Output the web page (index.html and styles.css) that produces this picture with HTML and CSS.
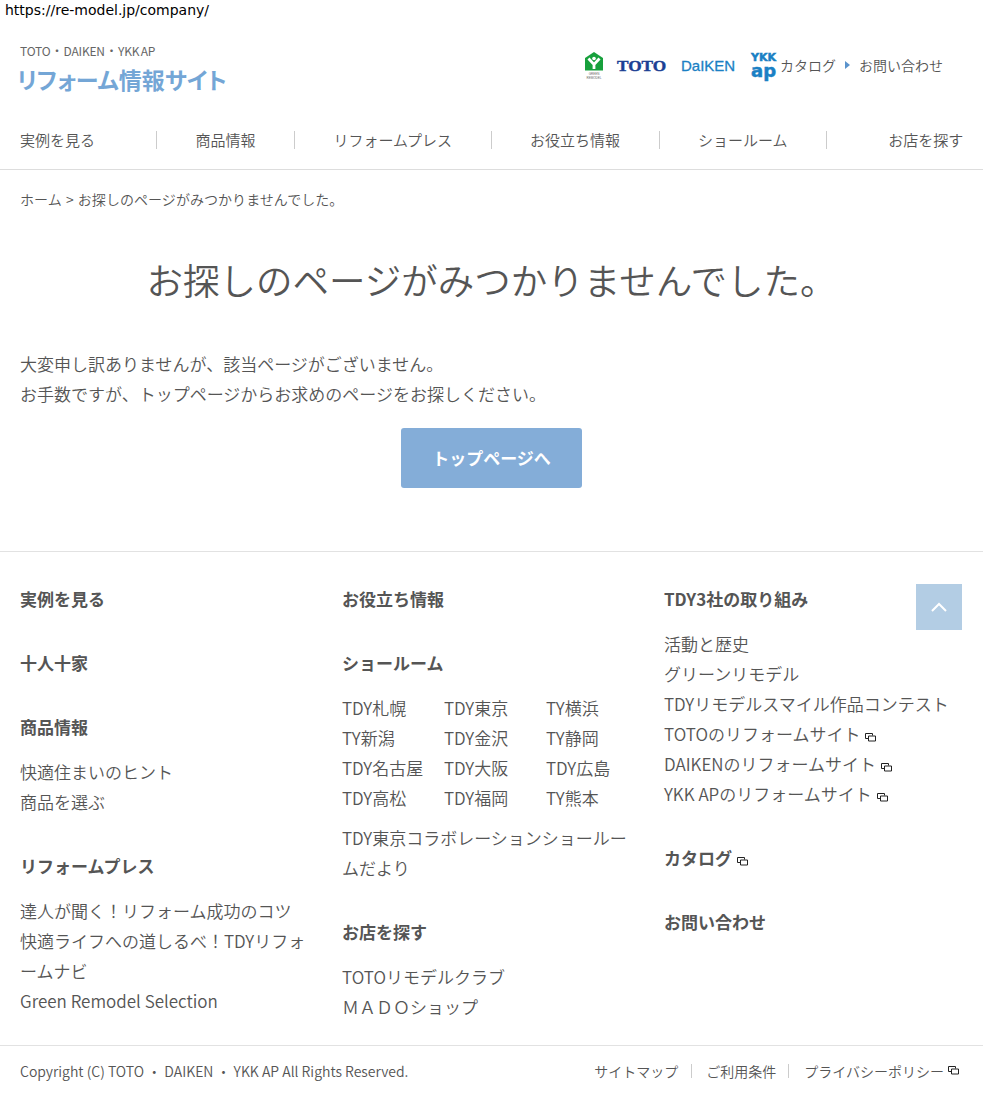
FILE: index.html
```html
<!DOCTYPE html>
<html lang="ja">
<head>
  <meta charset="UTF-8">
  <title>お探しのページがみつかりませんでした。</title>
  <link rel="stylesheet" href="styles.css">
</head>
<body>
  <div class="url">https://re-model.jp/company/</div>

  <header class="header">
    <a class="site-logo">
      <span class="site-sub">TOTO ・ DAIKEN ・ <span class="site-sub-last">YKK AP</span></span>
      <span class="site-name">リフォーム情報サイト</span>
    </a>
    <div class="header-right">
      <svg class="logo-green" width="20" height="27" viewBox="0 0 20 27">
        <path d="M10 0 L19 6 V18.500 H1 V6 Z" fill="#17a03c"/>
        <path d="M4.500 6.500 L10 12.500 L15.500 6.500 M10 12 V17" fill="none" stroke="#fff" stroke-width="2.800"/>
        <circle cx="10" cy="6.500" r="1.800" fill="#fff"/>
        <text class="green-text" x="10" y="22.500">GREEN</text>
        <text class="green-text" x="10" y="26.500">REMODEL</text>
      </svg>
      <span class="logo-toto">TOTO</span>
      <span class="logo-daiken">DaIKEN</span>
      <span class="logo-ykk"><span class="ykk-top">YKK</span><span class="ykk-bottom">ap</span></span>
      <a class="head-link">カタログ</a>
      <span class="head-arrow"></span>
      <a class="head-link">お問い合わせ</a>
    </div>
  </header>

  <nav class="gnav">
    <a class="gnav-item">実例を見る</a>
    <a class="gnav-item">商品情報</a>
    <a class="gnav-item">リフォームプレス</a>
    <a class="gnav-item">お役立ち情報</a>
    <a class="gnav-item">ショールーム</a>
    <a class="gnav-item">お店を探す</a>
  </nav>

  <div class="breadcrumb">ホーム &gt; お探しのページがみつかりませんでした。</div>

  <main class="main">
    <h1 class="title">お探しのページがみつかりませんでした。</h1>
    <p class="message">大変申し訳ありませんが、該当ページがございません。<br>お手数ですが、トップページからお求めのページをお探しください。</p>
    <a class="top-btn">トップページへ</a>
  </main>

  <footer class="footer">
    <a class="pagetop">
      <svg width="16" height="10" viewBox="0 0 16 10"><path d="M1 9 L8 2 L15 9" fill="none" stroke="#fff" stroke-width="2"/></svg>
    </a>
    <div class="fcols">
      <div class="fcol">
        <h3 class="fhead">実例を見る</h3>
        <h3 class="fhead">十人十家</h3>
        <h3 class="fhead">商品情報</h3>
        <ul class="flist">
          <li>快適住まいのヒント</li>
          <li>商品を選ぶ</li>
        </ul>
        <h3 class="fhead">リフォームプレス</h3>
        <ul class="flist">
          <li>達人が聞く！リフォーム成功のコツ</li>
          <li>快適ライフへの道しるべ！TDYリフォームナビ</li>
          <li>Green Remodel Selection</li>
        </ul>
      </div>
      <div class="fcol">
        <h3 class="fhead">お役立ち情報</h3>
        <h3 class="fhead">ショールーム</h3>
        <ul class="room-grid">
          <li>TDY札幌</li><li>TDY東京</li><li>TY横浜</li>
          <li>TY新潟</li><li>TDY金沢</li><li>TY静岡</li>
          <li>TDY名古屋</li><li>TDY大阪</li><li>TDY広島</li>
          <li>TDY高松</li><li>TDY福岡</li><li>TY熊本</li>
        </ul>
        <ul class="flist room-extra">
          <li>TDY東京コラボレーションショールームだより</li>
        </ul>
        <h3 class="fhead">お店を探す</h3>
        <ul class="flist">
          <li>TOTOリモデルクラブ</li>
          <li>ＭＡＤＯショップ</li>
        </ul>
      </div>
      <div class="fcol">
        <h3 class="fhead">TDY3社の取り組み</h3>
        <ul class="flist">
          <li>活動と歴史</li>
          <li>グリーンリモデル</li>
          <li>TDYリモデルスマイル作品コンテスト</li>
          <li>TOTOのリフォームサイト<svg class="ext" width="11" height="9" viewBox="0 0 11 9"><path d="M.5.500h7v2M.5.500v5h3M3.500 3h7v5h-7z" fill="#fff" stroke="#222"/></svg></li>
          <li>DAIKENのリフォームサイト<svg class="ext" width="11" height="9" viewBox="0 0 11 9"><path d="M.5.500h7v2M.5.500v5h3M3.500 3h7v5h-7z" fill="#fff" stroke="#222"/></svg></li>
          <li>YKK APのリフォームサイト<svg class="ext" width="11" height="9" viewBox="0 0 11 9"><path d="M.5.500h7v2M.5.500v5h3M3.500 3h7v5h-7z" fill="#fff" stroke="#222"/></svg></li>
        </ul>
        <h3 class="fhead">カタログ<svg class="ext" width="11" height="9" viewBox="0 0 11 9"><path d="M.5.500h7v2M.5.500v5h3M3.500 3h7v5h-7z" fill="#fff" stroke="#222"/></svg></h3>
        <h3 class="fhead">お問い合わせ</h3>
      </div>
    </div>
    <div class="fbottom">
      <p class="copyright">Copyright (C) TOTO ・ DAIKEN ・ YKK AP All Rights Reserved.</p>
      <ul class="fbottom-links">
        <li>サイトマップ</li>
        <li>ご利用条件</li>
        <li>プライバシーポリシー<svg class="ext ext-tight" width="11" height="9" viewBox="0 0 11 9"><path d="M.5.500h7v2M.5.500v5h3M3.500 3h7v5h-7z" fill="#fff" stroke="#222"/></svg></li>
      </ul>
    </div>
  </footer>
</body>
</html>
```

FILE: styles.css
```css
* {
  box-sizing: border-box;
}

body {
  margin: 0;
  color: #555;
  background-color: #fff;
  font-family: "Noto Sans CJK JP", "Noto Sans", sans-serif;
  font-size: 17px;
  font-weight: 350;
}

ul {
  list-style: none;
  margin: 0;
  padding: 0;
}

.url {
  height: 20px;
  padding-left: 5px;
  color: #000;
  font-family: "DejaVu Sans", sans-serif;
  font-size: 14px;
  font-weight: 400;
  line-height: 20px;
}

.header {
  display: flex;
  justify-content: space-between;
  height: 100px;
  padding: 22px 40px 0 20px;
}

.site-logo {
  display: block;
}

.site-sub {
  display: block;
  color: #666;
  font-size: 12px;
  font-weight: 400;
  line-height: 18px;
  letter-spacing: -0.2px;
  word-spacing: -1.800px;
}

.site-sub-last {
  word-spacing: -1px;
}

.site-name {
  display: block;
  margin: 3px 0 0 -3px;
  color: #74a6d6;
  font-size: 23px;
  font-weight: 700;
  font-feature-settings: "palt";
  line-height: 32px;
}

.header-right {
  display: flex;
  align-items: center;
  height: 46px;
}

.logo-green {
  margin: 0 13px 0 2px;
}

.green-text {
  fill: #666;
  font-family: "Liberation Sans", sans-serif;
  font-size: 3px;
  text-anchor: middle;
}

.logo-toto {
  width: 50px;
  margin: 2px 14px 0 0;
  color: #1c3f94;
  font-family: "Liberation Serif", serif;
  font-size: 15px;
  font-weight: 700;
  transform: scaleX(1.150);
  transform-origin: left;
  -webkit-text-stroke: 0.4px #1c3f94;
}

.logo-daiken {
  width: 53px;
  margin-right: 17px;
  color: #1a80c4;
  font-family: "Liberation Sans", sans-serif;
  font-size: 15px;
  font-weight: 400;
  -webkit-text-stroke: 0.3px #1a80c4;
}

.logo-ykk {
  display: flex;
  flex-direction: column;
  width: 25px;
  margin-right: 4px;
  color: #1a80c4;
  font-family: "DejaVu Sans", sans-serif;
  font-weight: 700;
  text-align: center;
  -webkit-text-stroke: 0.5px #1a80c4;
}

.ykk-top {
  font-size: 11px;
  line-height: 10px;
}

.ykk-bottom {
  font-size: 18px;
  line-height: 15px;
}

.head-link {
  font-size: 14px;
}

.head-arrow {
  width: 0;
  height: 0;
  margin: 0 9px;
  border-top: 4px solid transparent;
  border-bottom: 4px solid transparent;
  border-left: 5px solid #5a93cc;
}

.gnav {
  display: flex;
  height: 50px;
  padding-top: 11px;
  border-bottom: 1px solid #ddd;
  color: #555;
  font-size: 15px;
}

.gnav-item {
  height: 18px;
  padding: 0 38.600px 0 38.400px;
  border-left: 1px solid #ccc;
  line-height: 18px;
}

.gnav-item:first-child {
  padding: 0 61px 0 20px;
  border-left: 0;
}

.gnav-item:last-child {
  padding: 0 19px 0 61px;
}

.breadcrumb {
  padding: 19px 20px 0;
  font-size: 14px;
  line-height: 20px;
  letter-spacing: 0.050px;
  word-spacing: 1px;
}

.main {
  padding: 0 20px;
}

.title {
  margin: 45px 0 0;
  font-size: 36.500px;
  font-weight: 350;
  line-height: 52px;
  text-align: center;
}

.message {
  margin: 43px 0 0;
  font-size: 17px;
  line-height: 30px;
}

.top-btn {
  display: block;
  width: 181px;
  height: 60px;
  margin: 19px auto 0;
  border-radius: 3px;
  background-color: #84add8;
  color: #fff;
  font-weight: 700;
  line-height: 60px;
  text-align: center;
}

.footer {
  position: relative;
  margin-top: 63px;
  border-top: 1px solid #e2e2e2;
}

.pagetop {
  position: absolute;
  top: 32px;
  right: 21px;
  display: flex;
  align-items: center;
  justify-content: center;
  width: 46px;
  height: 46px;
  background-color: #b3cde4;
}

.fcols {
  display: grid;
  grid-template-columns: 322px 322px 1fr;
  height: 493px;
  padding: 32px 0 0 20px;
}

.fcol {
  padding-right: 30px;
}

.fhead {
  margin: 0 0 34px;
  color: #555;
  font-size: 17px;
  font-weight: 700;
  line-height: 30px;
}

.flist {
  margin: -19px 0 34px;
  line-height: 30px;
}

.room-grid {
  display: grid;
  grid-template-columns: 102px 102px 1fr;
  margin-top: -19px;
  line-height: 30px;
}

.room-extra {
  margin: 10px 0 34px;
}

.ext {
  margin-left: 5px;
  vertical-align: -1px;
}

.ext-tight {
  margin-left: 4px;
  vertical-align: 2px;
}

.fbottom {
  display: flex;
  justify-content: space-between;
  height: 50px;
  padding: 14px 24px 0 20px;
  border-top: 1px solid #e2e2e2;
  font-size: 14px;
  line-height: 22px;
}

.copyright {
  margin: 0;
}

.fbottom-links {
  display: flex;
}

.fbottom-links li {
  height: 14px;
  margin-top: 4px;
  padding: 0 12px 0 14px;
  border-left: 1px solid #ccc;
  line-height: 14px;
}

.fbottom-links li:first-child {
  padding: 0 13px 0 0;
  border-left: 0;
}

.fbottom-links li:last-child {
  padding: 0 0 0 15px;
}
```
